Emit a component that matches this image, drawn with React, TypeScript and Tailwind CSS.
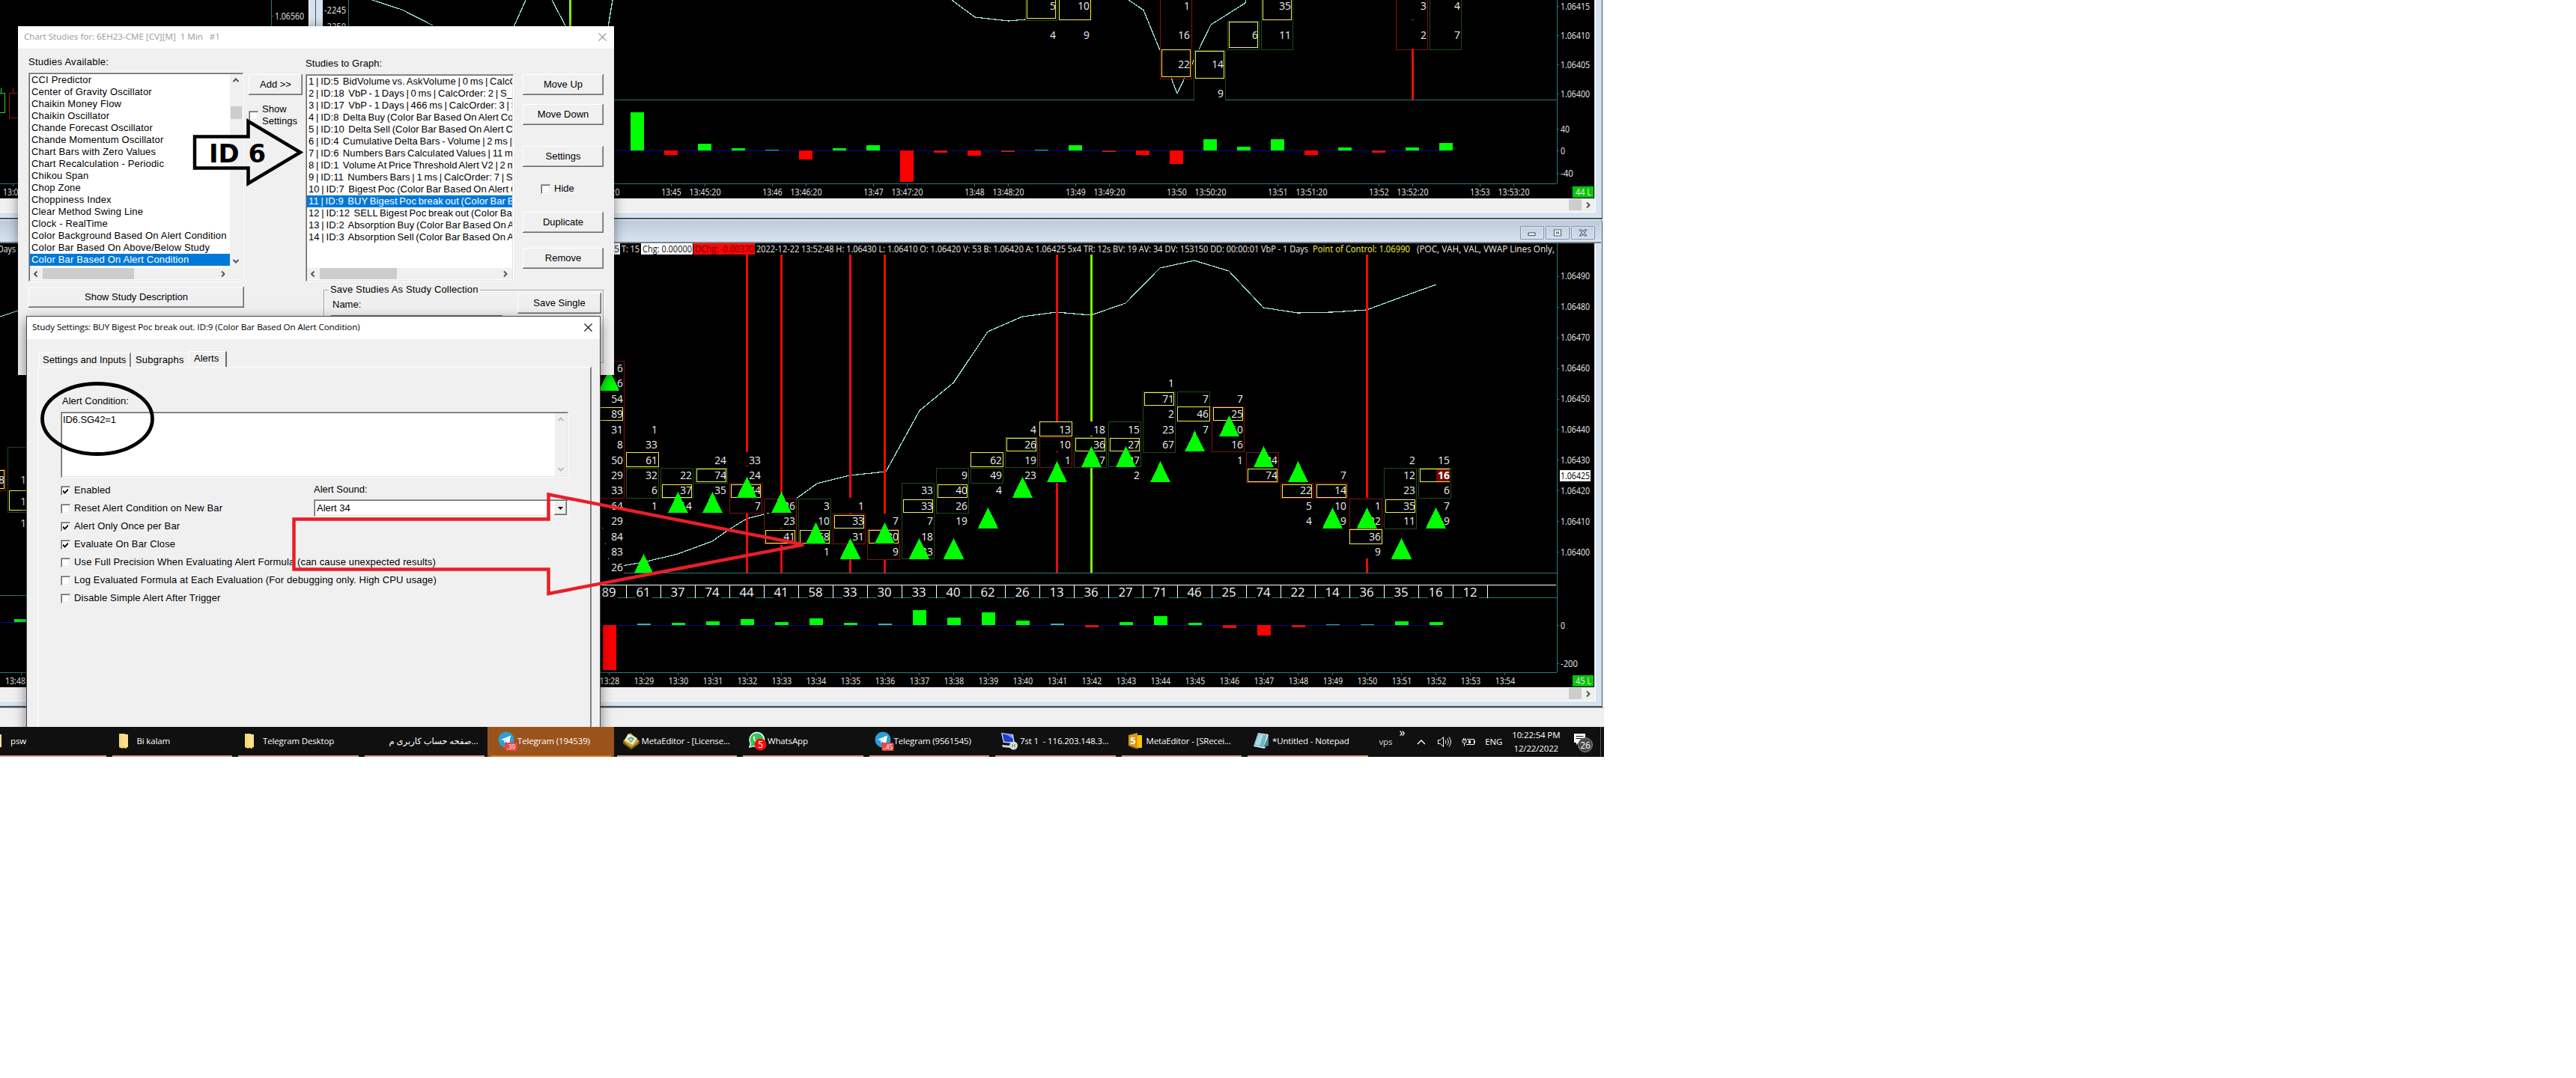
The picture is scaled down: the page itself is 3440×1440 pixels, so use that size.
import type { ReactNode } from 'react';
import clsx from 'clsx';

type Box = 'g' | 'r';

interface Column {
  top: number; // row index of the first value, 0 = 1.06400
  values: string[];
  poc: number; // index in values that gets the yellow frame
  box?: [Box, number, number]; // colour, top row, bottom row
  wide?: boolean;
  marker?: number;
  total: string;
  delta: number;
}

const COLUMNS: Column[] = [
  { top: 12, values: ['6', '6', '54', '89', '31', '8', '50', '29', '33', '64', '29', '84', '83', '26'], poc: 3, box: ['r', 12, 4], marker: 11, total: '89', delta: -60 },
  { top: 8, values: ['1', '33', '61', '32', '6', '1'], poc: 2, wide: true, box: ['g', 5, 4], marker: -1, total: '61', delta: 2 },
  { top: 5, values: ['22', '37', '14'], poc: 1, box: ['g', 5, 4], marker: 3, total: '37', delta: 3 },
  { top: 6, values: ['24', '74', '35'], poc: 1, box: ['g', 5, 5], marker: 3, total: '74', delta: 5 },
  { top: 6, values: ['33', '24', '44', '7'], poc: 2, box: ['r', 4, 3], marker: 4, total: '44', delta: 8 },
  { top: 3, values: ['26', '23', '41'], poc: 2, box: ['r', 3, 1], marker: 3, total: '41', delta: 4 },
  { top: 3, values: ['3', '10', '58', '1'], poc: 2, box: ['g', 3, 1], marker: 1, total: '58', delta: 9 },
  { top: 3, values: ['1', '33', '31'], poc: 1, box: ['r', 2, 1], marker: 0, total: '33', delta: 3 },
  { top: 2, values: ['7', '30', '9'], poc: 1, box: ['r', 1, 0], marker: 1, total: '30', delta: 2 },
  { top: 4, values: ['33', '33', '7', '18', '33'], poc: 1, box: ['g', 4, 0], marker: 0, total: '33', delta: 20 },
  { top: 5, values: ['9', '40', '26', '19'], poc: 1, box: ['g', 5, 3], marker: 0, total: '40', delta: 10 },
  { top: 6, values: ['62', '49', '4'], poc: 0, wide: true, box: ['g', 5, 5], marker: 2, total: '62', delta: 17 },
  { top: 8, values: ['4', '26', '19', '23'], poc: 1, box: ['g', 7, 6], marker: 4, total: '26', delta: 6 },
  { top: 8, values: ['13', '10', '1'], poc: 0, wide: true, box: ['r', 7, 6], marker: 5, total: '13', delta: 2 },
  { top: 8, values: ['18', '36', '17'], poc: 1, box: ['g', 7, 6], marker: 6, total: '36', delta: -3 },
  { top: 8, values: ['15', '27', '27', '2'], poc: 1, box: ['g', 8, 6], marker: 6, total: '27', delta: 4 },
  { top: 11, values: ['1', '71', '2', '23', '67'], poc: 1, box: ['g', 10, 7], marker: 5, total: '71', delta: 12 },
  { top: 10, values: ['7', '46', '7'], poc: 1, wide: true, box: ['g', 10, 10], marker: 7, total: '46', delta: 3 },
  { top: 10, values: ['7', '25', '10', '16', '1'], poc: 1, box: ['r', 9, 7], marker: 8, total: '25', delta: -4 },
  { top: 6, values: ['34', '74'], poc: 1, box: ['r', 6, 5], marker: 6, total: '74', delta: -14 },
  { top: 4, values: ['22', '5', '4'], poc: 0, box: ['r', 4, 4], marker: 5, total: '22', delta: -3 },
  { top: 5, values: ['7', '14', '10', '9'], poc: 1, box: ['r', 4, 4], marker: 2, total: '14', delta: 1 },
  { top: 3, values: ['1', '22', '36', '9'], poc: 2, wide: true, box: ['r', 3, 2], marker: 2, total: '36', delta: 1 },
  { top: 6, values: ['2', '12', '23', '35', '11'], poc: 3, box: ['g', 5, 2], marker: 0, total: '35', delta: 5 },
  { top: 6, values: ['15', '16', '6', '7', '9'], poc: 1, box: ['g', 5, 4], marker: 2, total: '16', delta: 4 },
];

// [x, y1, y2]
const RED_LINES = [
  [998, 340, 604], [998, 622, 623], [998, 685, 765],
  [1044, 340, 662], [1044, 705, 706], [1044, 728, 765],
  [1136, 340, 665], [1136, 685, 686], [1136, 746, 765],
  [1182, 340, 686], [1182, 747, 765],
  [1412, 340, 563], [1412, 603, 604], [1412, 645, 765],
  [1826, 340, 665], [1826, 746, 765],
];
const LIME_LINES = [[1458, 340, 563], [1458, 582, 583], [1458, 625, 765]];

const TOP_BARS = [51, -6, 9, 3, 1, -12, 3, 7, -42, -3, -7, -2, 1, 7, -2, -6, -18, 15, 5, 15, -6, 4, -3, 4, 10];

const TOP_TIMES: [number, string][] = [
  [807, '13:44:20'], [897, '13:45'], [942, '13:45:20'], [1032, '13:46'], [1077, '13:46:20'], [1167, '13:47'],
  [1212, '13:47:20'], [1302, '13:48'], [1347, '13:48:20'], [1437, '13:49'], [1482, '13:49:20'], [1572, '13:50'],
  [1617, '13:50:20'], [1707, '13:51'], [1752, '13:51:20'], [1842, '13:52'], [1887, '13:52:20'], [1977, '13:53'],
  [2022, '13:53:20'],
];

const STUDIES = [
  'CCI Predictor', 'Center of Gravity Oscillator', 'Chaikin Money Flow', 'Chaikin Oscillator',
  'Chande Forecast Oscillator', 'Chande Momentum Oscillator', 'Chart Bars with Zero Values',
  'Chart Recalculation - Periodic', 'Chikou Span', 'Chop Zone', 'Choppiness Index', 'Clear Method Swing Line',
  'Clock - RealTime', 'Color Background Based On Alert Condition', 'Color Bar Based On Above/Below Study',
  'Color Bar Based On Alert Condition',
];

const GRAPHED = [
  '1 | ID:5  BidVolume vs. AskVolume | 0 ms | CalcOrder: 1',
  '2 | ID:18  VbP - 1 Days | 0 ms | CalcOrder: 2 | S_VbP',
  '3 | ID:17  VbP - 1 Days | 466 ms | CalcOrder: 3 | S_VbP',
  '4 | ID:8  Delta Buy (Color Bar Based On Alert Condition)',
  '5 | ID:10  Delta Sell (Color Bar Based On Alert Condition)',
  '6 | ID:4  Cumulative Delta Bars - Volume | 2 ms |',
  '7 | ID:6  Numbers Bars Calculated Values | 11 ms',
  '8 | ID:1  Volume At Price Threshold Alert V2 | 2 ms',
  '9 | ID:11  Numbers Bars | 1 ms | CalcOrder: 7 | S_',
  '10 | ID:7  Bigest Poc (Color Bar Based On Alert Condition)',
  '11 | ID:9  BUY Bigest Poc break out (Color Bar Based',
  '12 | ID:12  SELL Bigest Poc break out (Color Bar Based',
  '13 | ID:2  Absorption Buy (Color Bar Based On Alert',
  '14 | ID:3  Absorption Sell (Color Bar Based On Alert',
];

const CHECKS: [string, boolean][] = [
  ['Enabled', true],
  ['Reset Alert Condition on New Bar', false],
  ['Alert Only Once per Bar', true],
  ['Evaluate On Bar Close', true],
  ['Use Full Precision When Evaluating Alert Formula (can cause unexpected results)', false],
  ['Log Evaluated Formula at Each Evaluation (For debugging only. High CPU usage)', false],
  ['Disable Simple Alert After Trigger', false],
];

const TEAL = '#2a7a78';
const RAISED = 'bg-[#f0f0f0] shadow-[inset_-1px_-1px_#696969,inset_1px_1px_#fff,inset_-2px_-2px_#a0a0a0]';
const SUNKEN = 'bg-white shadow-[inset_1px_1px_#a0a0a0,inset_-1px_-1px_#fff,inset_2px_2px_#696969,inset_-2px_-2px_#e3e3e3]';

const cx = (i: number) => 814.5 + 46 * i;
const rowY = (k: number) => 737.5 - 20.45 * k;

function Label({ x, y, w, anchor = 'start', fill = '#e8e8e8', children }: {
  x: number; y: number; w: number; anchor?: 'start' | 'middle' | 'end'; fill?: string; children: string;
}) {
  return (
    <text x={x} y={y + 4} fontSize="12.3" textAnchor={anchor} textLength={w} lengthAdjust="spacingAndGlyphs" fill={fill} xmlSpace="preserve">
      {children}
    </text>
  );
}

function Num({ x, y, children }: { x: number; y: number; children: string }) {
  return <text x={x} y={y + 4.7} fontSize="13.8" textAnchor="end" fill="#f0f0f0">{children}</text>;
}

function Frame({ x1, y1, x2, y2, color }: { x1: number; y1: number; x2: number; y2: number; color: string }) {
  return <rect x={Math.round(x1) + 0.5} y={Math.round(y1) + 0.5} width={Math.round(x2 - x1)} height={Math.round(y2 - y1)} fill="none" stroke={color} />;
}

function Bar({ x, zero, v }: { x: number; zero: number; v: number }) {
  const color = v > 0 ? (v <= 2 ? '#35c46a' : '#00ff00') : v >= -2 ? '#b02222' : v >= -4 ? '#e01010' : '#ff0000';
  return <rect x={x - 9} y={v > 0 ? zero - v : zero} width="18" height={Math.abs(v)} fill={color} />;
}

function Chevron({ dir, muted }: { dir: 'up' | 'down' | 'left' | 'right'; muted?: boolean }) {
  const d = { up: 'M1.5 6 5 2.5 8.5 6', down: 'M1.5 3 5 6.5 8.5 3', left: 'M6.5 1.5 3 5 6.5 8.5', right: 'M3 1.5 6.5 5 3 8.5' }[dir];
  return (
    <svg width="10" height="10" className="shrink-0">
      <path d={d} fill="none" stroke={muted ? '#bdbdbd' : '#555'} strokeWidth="2" />
    </svg>
  );
}

function TopChart() {
  return (
    <svg viewBox="432 0 1698 265" width="1698" height="265" shapeRendering="crispEdges" className="block shrink-0 bg-black">
      <g fill="none" stroke="#a8f0ea" strokeWidth="1.2">
        <path d="M498 0 538 13 579 34M703 0 687 36M738 0 757 36M819 0 813 36" />
        <path d="M1272 0 1303 23 1348 28 1370 26M1508 0 1528 13.500 1550 67M1565 104 1573 125 1583 104M1593 86 1595 80M1602 66 1618 33 1664 4 1665 0" />
      </g>
      <path d="M466.500 0V245M432 133.500H2080M432 245.500H2080M2080.500 0V245" stroke={TEAL} fill="none" />
      <rect x="761" y="0" width="3" height="40" fill="#7fee10" />
      <Label x={434} y={14} w={29}>-2245</Label>
      <Label x={434} y={36} w={29}>-2250</Label>
      <rect x="1886" y="65" width="3" height="68" fill="#e80c0c" />
      <rect x="1886" y="26" width="3" height="1" fill="#c02020" />
      <g>
        <Frame x1={1370} y1={-4} x2={1412} y2={27} color="#1d4a1d" />
        <Frame x1={1372} y1={-4} x2={1410} y2={24} color="#f5f04a" />
        <Frame x1={1415} y1={-4} x2={1457} y2={26} color="#f5f04a" />
        <Frame x1={1550} y1={-4} x2={1592} y2={105} color="#7d1414" />
        <Frame x1={1552} y1={66} x2={1590} y2={102} color="#f5f04a" />
        <path d="M1595.500 133V67.500H1637.500V133" fill="#000" stroke="#1d4a1d" />
        <rect x="1596" y="130" width="41" height="5" fill="#000" />
        <Frame x1={1597} y1={68} x2={1635} y2={104} color="#f5f04a" />
        <Frame x1={1640} y1={28} x2={1682} y2={66} color="#1d4a1d" />
        <Frame x1={1642} y1={29} x2={1680} y2={63} color="#f5f04a" />
        <Frame x1={1685} y1={-4} x2={1727} y2={66} color="#1d4a1d" />
        <Frame x1={1687} y1={-4} x2={1725} y2={26} color="#f5f04a" />
        <Frame x1={1865} y1={-4} x2={1907} y2={66} color="#7d1414" />
        <Frame x1={1910} y1={-4} x2={1952} y2={66} color="#1d4a1d" />
      </g>
      <Num x={1411} y={8.500}>5</Num>
      <Num x={1456} y={8.500}>10</Num>
      <Num x={1411} y={47.500}>4</Num>
      <Num x={1456} y={47.500}>9</Num>
      <Num x={1590} y={8.500}>1</Num>
      <Num x={1590} y={47.500}>16</Num>
      <Num x={1590} y={86.500}>22</Num>
      <Num x={1635} y={86.500}>14</Num>
      <Num x={1635} y={125.500}>9</Num>
      <Num x={1681} y={47.500}>6</Num>
      <Num x={1725} y={8.500}>35</Num>
      <Num x={1725} y={47.500}>11</Num>
      <Num x={1906} y={8.500}>3</Num>
      <Num x={1906} y={47.500}>2</Num>
      <Num x={1951} y={8.500}>4</Num>
      <Num x={1951} y={47.500}>7</Num>
      <path d="M820 201.500H1932" stroke="#0a0a8c" />
      {TOP_BARS.map((v, i) => <Bar key={i} x={852 + 45 * i} zero={201} v={v} />)}
      {TOP_TIMES.map(([x, t]) => (
        <g key={t}>
          <path d={`M${x + 0.5} 246v3`} stroke={TEAL} />
          <Label x={x + 0.5} y={257} w={t.length > 5 ? 42 : 26.5} anchor="middle">{t}</Label>
        </g>
      ))}
      {['1.06415', '1.06410', '1.06405', '1.06400'].map((t, i) => (
        <g key={t}>
          <path d={`M2081 ${8.5 + 39 * i}h2`} stroke={TEAL} />
          <Label x={2085} y={8.500 + 39 * i} w={39}>{t}</Label>
        </g>
      ))}
      <path d="M2081 172.500h2M2081 201.500h2M2081 231.500h2" stroke={TEAL} />
      <Label x={2085} y={172.500} w={12}>40</Label>
      <Label x={2085} y={201.500} w={6}>0</Label>
      <Label x={2085} y={231.500} w={17}>-40</Label>
      <rect x="2101" y="249" width="28" height="15" fill="#08c408" />
      <Label x={2105} y={257} w={21}>44 L</Label>
    </svg>
  );
}

function MainChart() {
  const last = COLUMNS.length - 1;
  return (
    <svg viewBox="432 325 1698 593" width="1698" height="593" shapeRendering="crispEdges" className="block shrink-0 bg-black">
      <path d="M834 765.500H2080M2080.500 325V898M432 898.500H2080M800 798.500H2080" stroke={TEAL} fill="none" />
      <path
        d="M834 755.500 860 751 906 740 952 723 975 707 998 693 1021 687M1025 685.500H1028M1065 665.500 1092 646 1136 635 1184 630 1229 548.500 1274.500 511 1320 443 1366 423 1412 417 1458 421 1504 405 1550 358 1596 348 1642 362 1688 411 1734 418 1780 417 1826 414 1872 397 1919 380"
        fill="none" stroke="#a8f0ea" strokeWidth="1.2"
      />
      <path d="M805 705.500h1M809 726.500h1M813 746.500h1" stroke="#ddd" />
      {RED_LINES.map(([x, a, b], i) => <rect key={i} x={x - 1} y={a} width="3" height={b - a} fill="#e80c0c" />)}
      {LIME_LINES.map(([x, a, b], i) => <rect key={i} x={x - 1} y={a} width="3" height={b - a} fill="#7fee10" />)}

      {COLUMNS.map((c, i) => {
        const x = cx(i);
        const py = rowY(c.top - c.poc);
        return (
          <g key={i}>
            {c.box && (
              <Frame x1={x - 23.5} y1={rowY(c.box[1]) - 10.5} x2={x + 19.5} y2={rowY(c.box[2]) + 9} color={c.box[0] === 'g' ? '#1d4a1d' : '#7d1414'} />
            )}
            {c.wide
              ? <Frame x1={x - 23.5} y1={py - 10.5} x2={x + 19.5} y2={py + 8} color="#f5f04a" />
              : <Frame x1={x - 21.5} y1={py - 9} x2={x + 17.5} y2={py + 8} color="#f5f04a" />}
            {i === last && <rect x={x + 0.5} y={rowY(5) - 8} width="18" height="16" fill="#7a0404" />}
            {c.values.map((v, j) => {
              if (i === last && j === 1) {
                return <text key={j} x={x + 18.5} y={rowY(5) + 5} fontSize="14" fontWeight="700" textAnchor="end" fill="#fff">{v}</text>;
              }
              return <Num key={j} x={x + 18.500} y={rowY(c.top - j)}>{v}</Num>;
            })}
          </g>
        );
      })}

      {/* alert markers sit over the numbers */}
      {COLUMNS.map((c, i) => {
        if (c.marker === undefined) return null;
        const y = rowY(c.marker) + 9;
        if (c.marker === -1) return <path key={i} d={`M${cx(i)} 739.500l12.500 25.500h-25z`} fill="#00ff00" />;
        return <path key={i} d={`M${cx(i)} ${y - 28}l13.500 28h-27z`} fill="#00ff00" />;
      })}

      <path d="M800 781.500H2079" stroke="#fff" />
      {[...COLUMNS.map((c) => c.total), '12'].map((t, i) => (
        <g key={i}>
          <path d={`M${Math.round(cx(i) + 22.5)}.5 782v17`} stroke="#fff" />
          <rect x={cx(i) - 11} y="784" width="22" height="16" fill="#000" />
          <text x={cx(i) - 0.5} y="797" fontSize="16.8" textAnchor="middle" fill="#f4f4f4">{t}</text>
        </g>
      ))}

      <path d="M800 835.500H1919" stroke="#0a0a8c" />
      {COLUMNS.map((c, i) => <Bar key={i} x={cx(i)} zero={835} v={c.delta} />)}
      {Array.from({ length: 27 }, (_, i) => (
        <g key={i}>
          <path d={`M${cx(i)} 899v3`} stroke={TEAL} />
          <Label x={cx(i) + 0.500} y={909.500} w={26.500} anchor="middle">{`13:${28 + i}`}</Label>
        </g>
      ))}

      {Array.from({ length: 10 }, (_, i) => 1.064 + i * 0.0001).map((p, i) => (
        <g key={i}>
          <path d={`M2081 ${Math.round(rowY(i * 2) - 0.5)}.5h2`} stroke={TEAL} />
          <Label x={2085} y={rowY(i * 2)} w={39}>{p.toFixed(5)}</Label>
        </g>
      ))}
      <rect x="2084" y="628" width="41" height="15" fill="#fff" />
      <Label x={2085} y={635.500} w={39} fill="#000">1.06425</Label>
      <path d="M2081 835.500h2M2081 886.500h2" stroke={TEAL} />
      <Label x={2085} y={835.500} w={6}>0</Label>
      <Label x={2085} y={887} w={23}>-200</Label>
      <rect x="2101" y="902" width="28" height="15" fill="#08c408" />
      <Label x={2105} y={910} w={21}>45 L</Label>

      <rect x="780" y="325" width="49" height="15" fill="#fff" />
      <Label x={814} y={332.500} w={14} fill="#222">25</Label>
      <Label x={831} y={332.500} w={24}>T: 15</Label>
      <rect x="857" y="325" width="69" height="15" fill="#fff" />
      <Label x={859} y={332.500} w={66} fill="#111">Chg: 0.00000</Label>
      <rect x="927" y="325" width="82" height="15" fill="#f80808" />
      <Label x={929} y={332.500} w={79} fill="#6e0000">DChg: -0.00370</Label>
      <Label x={1011} y={332.500} w={737}>
        2022-12-22 13:52:48 H: 1.06430 L: 1.06410 O: 1.06420 V: 53 B: 1.06420 A: 1.06425 5x4 TR: 12s BV: 19 AV: 34 DV: 153150 DD: 00:00:01 VbP - 1 Days
      </Label>
      <Label x={1754} y={332.500} w={130} fill="#f5f53c">Point of Control: 1.06990</Label>
      <Label x={1893} y={332.500} w={184}>(POC, VAH, VAL, VWAP Lines Only,</Label>
    </svg>
  );
}

function LeftTopChart() {
  return (
    <svg width="412" height="265" shapeRendering="crispEdges" className="block shrink-0 bg-black">
      <path d="M362.500 0V245M0 245.500H362M363 21.500h2M17.500 246v3" stroke={TEAL} fill="none" />
      <Label x={367} y={22} w={39}>1.06560</Label>
      <path d="M-5 124.500H6.500V150.500H-5M1.500 118v6" stroke="#35d235" fill="none" />
      <path d="M12.500 124.500H30V157.500H12.500zM17.500 118v6" stroke="#a51818" fill="none" />
      <Label x={4} y={257} w={26.500}>13:07</Label>
    </svg>
  );
}

function LeftBottomChart() {
  return (
    <svg viewBox="0 325 412 593" width="412" height="593" shapeRendering="crispEdges" className="block shrink-0 bg-black">
      <Label x={-3} y={333} w={24}>Days</Label>
      <path d="M0 423 24 415" stroke="#a8f0ea" />
      <path d="M0 795.500H60M0 898.500H60M28.500 899v3" stroke={TEAL} />
      <Frame x1={-5} y1={627} x2={7} y2={655} color="#7d1414" />
      <Frame x1={-5} y1={628} x2={5} y2={652} color="#f5f04a" />
      <Frame x1={10} y1={597} x2={50} y2={684} color="#1d4a1d" />
      <Frame x1={12} y1={655} x2={50} y2={681} color="#f5f04a" />
      <Num x={6} y={641.500}>8</Num>
      <Num x={43} y={641.500}>12</Num>
      <Num x={43} y={670.500}>14</Num>
      <Num x={43} y={699.500}>11</Num>
      <path d="M0 831.500H60" stroke="#0a0a8c" />
      <rect x="19" y="827" width="18" height="4" fill="#10e820" />
      <Label x={7} y={910} w={27}>13:48</Label>
    </svg>
  );
}

function ChartScroll() {
  return (
    <div className="flex h-[18px] shrink-0 items-center justify-end bg-[#f0f0f0] pr-1">
      <div className="mb-[2px] h-[15px] w-[17px] bg-[#cdcdcd]" />
      <div className="ml-[4px]"><Chevron dir="right" /></div>
    </div>
  );
}

function CaptionButton({ children }: { children: ReactNode }) {
  return (
    <div className="flex h-[18px] w-8 items-center justify-center rounded-[1px] border border-[#8593ab] shadow-[inset_0_0_0_1px_#dbe6f2]">
      <svg width="12" height="10" fill="none" stroke="#59616e" strokeWidth="1.2">{children}</svg>
    </div>
  );
}

function ChartWindow({ className, title, children }: { className: string; title?: ReactNode; children: ReactNode }) {
  return (
    <section className={clsx('absolute flex flex-col border-r border-b-2 border-[#4a4f52] bg-[#d6e3f1] pr-2 pb-[7px]', className)}>
      {title}
      <div className="flex flex-col border-r border-b border-white">{children}</div>
    </section>
  );
}

function PushButton({ className, children }: { className?: string; children: ReactNode }) {
  return <div className={clsx('flex h-7 shrink-0 items-center justify-center pb-px', RAISED, className)}>{children}</div>;
}

function CheckBox({ checked }: { checked?: boolean }) {
  return (
    <div className={clsx('flex h-[13px] w-[13px] shrink-0 items-center justify-center', SUNKEN)}>
      {checked && (
        <svg width="9" height="9"><path d="M1 3.500 3.500 6 8 1.500V4.200L3.500 8.700 1 6.200z" fill="#000" /></svg>
      )}
    </div>
  );
}

function ListRows({ rows, selected, className }: { rows: string[]; selected: number; className?: string }) {
  return (
    <div className={clsx('min-w-0 flex-1 overflow-hidden whitespace-pre', className)}>
      {rows.map((r, i) => (
        <div key={r} className={clsx('h-4 overflow-hidden pl-[2px] leading-4', i === selected && 'bg-[#0078d7] text-white')}>{r}</div>
      ))}
    </div>
  );
}

function HScroll({ thumb, className }: { thumb: string; className?: string }) {
  return (
    <div className={clsx('flex h-[15px] shrink-0 items-center bg-[#f0f0f0]', className)}>
      <span className="ml-[3px] mr-1"><Chevron dir="left" /></span>
      <div className={clsx('h-[15px] bg-[#cdcdcd]', thumb)} />
      <span className="mr-1 ml-auto"><Chevron dir="right" /></span>
    </div>
  );
}

function CloseX({ color }: { color: string }) {
  return (
    <svg width="11" height="11"><path d="M.5.5l10 10M10.500.5l-10 10" stroke={color} strokeWidth="1.1" /></svg>
  );
}

function ChartStudiesDialog() {
  return (
    <section className="absolute top-[35px] left-6 flex h-[466px] w-[796px] flex-col bg-[#f0f0f0] font-['Liberation_Sans',sans-serif] text-[13px] leading-4 text-black shadow-[0_2px_14px_rgba(0,0,0,0.45)]">
      <header className="flex h-[30px] shrink-0 items-center justify-between bg-white pr-[10px] pb-[2px] pl-2 font-['Open_Sans',sans-serif] text-[11.6px] whitespace-pre text-[#999]">
        <span>{'Chart Studies for: 6EH23-CME [CV][M]  1 Min   #1'}</span>
        <CloseX color="#999" />
      </header>
      <div className="flex">
        <div className="ml-[14px] flex w-[288px] flex-col pt-[10px]">
          <span className="tracking-[0.27px]">Studies Available:</span>
          <div className={clsx('mt-[6px] flex h-[279px] w-[287px] flex-col p-[2px]', SUNKEN)}>
            <div className="flex flex-1">
              <ListRows rows={STUDIES} selected={15} className="tracking-[0.17px]" />
              <div className="flex w-4 flex-col items-center bg-[#f0f0f0] pt-1">
                <Chevron dir="up" />
                <div className="mt-[29px] h-[17px] w-[15px] bg-[#cdcdcd]" />
                <span className="mt-auto mb-1"><Chevron dir="down" /></span>
              </div>
            </div>
            <HScroll thumb="w-[122px]" className="mb-px pr-4" />
          </div>
          <PushButton className="mt-[7px]">Show Study Description</PushButton>
        </div>

        <div className="ml-[6px] flex w-[72px] flex-col pt-[34px]">
          <PushButton>Add &gt;&gt;</PushButton>
          <div className="mt-[11px] flex gap-[5px]">
            <div className="pt-[10px]"><CheckBox /></div>
            <span>Show<br />Settings</span>
          </div>
        </div>

        <div className="ml-1 flex flex-col">
          <div className="flex">
            <div className="flex w-[278px] flex-col pt-[12px]">
              <span className="tracking-[0.06px]">Studies to Graph:</span>
              <div className={clsx('mt-[6px] flex h-[277px] flex-col p-[2px]', SUNKEN)}>
                <div className="flex flex-1"><ListRows rows={GRAPHED} selected={10} className="tracking-[0.13px] [word-spacing:-1.1px]" /></div>
                <HScroll thumb="w-[103px]" className="mb-px" />
              </div>
            </div>
            <div className="ml-3 flex w-[108px] flex-col pt-[34px]">
              <PushButton>Move Up</PushButton>
              <PushButton className="mt-3">Move Down</PushButton>
              <PushButton className="mt-7">Settings</PushButton>
              <div className="mt-[21px] ml-6 flex h-4 items-center gap-[5px]"><CheckBox />Hide</div>
              <PushButton className="mt-[23px]">Duplicate</PushButton>
              <PushButton className="mt-5">Remove</PushButton>
            </div>
          </div>
          <div className="mt-[11px] ml-6 h-[98px] w-[374px] border border-[#a0a0a0] shadow-[inset_1px_1px_#fff,1px_1px_#fff]">
            <div className="-mt-[9px] ml-[6px] w-max bg-[#f0f0f0] px-[2px] tracking-[0.17px]">Save Studies As Study Collection</div>
            <div className="-mt-1 flex justify-between pr-[2px] pl-[11px]">
              <span className="pt-[8px]">Name:</span>
              <PushButton className="w-[112px]">Save Single</PushButton>
            </div>
            <div className="mt-[2px] ml-[9px] h-px w-[229px] bg-[#696969]" />
          </div>
        </div>
      </div>
    </section>
  );
}

function StudySettingsDialog() {
  return (
    <section className="absolute top-[422px] left-[35px] flex h-[560px] w-[767px] flex-col border border-[#4a4a4a] bg-[#f0f0f0] font-['Liberation_Sans',sans-serif] text-[13px] leading-4 text-black shadow-[0_6px_16px_rgba(0,0,0,0.5)]">
      <header className="flex h-[30px] shrink-0 items-center justify-between bg-white pr-[10px] pb-[2px] pl-[7px] font-['Open_Sans',sans-serif] text-[11.6px] tracking-[-0.1px] whitespace-pre">
        <span>Study Settings: BUY Bigest Poc break out. ID:9 (Color Bar Based On Alert Condition)</span>
        <CloseX color="#111" />
      </header>
      <div className="flex h-[38px] shrink-0 items-end pl-4 whitespace-nowrap">
        <div className="h-5 w-[123px] border-t border-r-2 border-l border-t-white border-r-[#808080] border-l-white pt-px pl-1">Settings and Inputs</div>
        <div className="ml-px h-5 w-[76px] border-t border-l border-white pt-px pl-1 tracking-[0.2px]">Subgraphs</div>
        <div className="h-[22px] w-[51px] border-t border-r-2 border-l border-t-white border-r-[#696969] border-l-white pt-px pl-[6px]">Alerts</div>
      </div>
      <div className="-mt-px ml-[14px] flex w-[740px] flex-1 flex-col border-t border-r-2 border-l border-t-white border-r-[#808080] border-l-white pl-[30px]">
        <span className="mt-[37px] ml-[2px]">Alert Condition:</span>
        <div className={clsx('mt-[6px] flex h-[88px] w-[678px] p-[2px]', SUNKEN)}>
          <span className="flex-1 pt-px pl-px tracking-[-0.1px]">ID6.SG42=1</span>
          <div className="flex w-4 flex-col items-center justify-between bg-[#f0f0f0] py-1">
            <Chevron dir="up" muted />
            <Chevron dir="down" muted />
          </div>
        </div>
        <div className="mt-[5px] flex">
          <div className="flex w-[338px] flex-col tracking-[0.14px] whitespace-nowrap">
            {CHECKS.map(([text, on]) => (
              <div key={text} className="flex h-6 items-center gap-[5px]"><CheckBox checked={on} />{text}</div>
            ))}
          </div>
          <div className="flex flex-col pt-[3px]">
            <span>Alert Sound:</span>
            <div className={clsx('mt-[5px] flex h-[23px] w-[340px] items-center p-[2px]', SUNKEN)}>
              <span className="flex-1 pl-[2px]">Alert 34</span>
              <div className={clsx('flex h-[19px] w-[17px] items-center justify-center', RAISED)}>
                <svg width="7" height="4"><path d="M0 0h7L3.500 4z" /></svg>
              </div>
            </div>
          </div>
        </div>
      </div>
    </section>
  );
}

function FolderIcon() {
  return (
    <svg width="24" height="24" viewBox="0 0 24 24">
      <path d="M2 2h8l2 2v18l-4-1-6-1z" fill="#e9c15d" />
      <path d="M3 3h11v17l-6 1z" fill="#fbdf8e" />
      <path d="M2 3l5 4v15l-5-2z" fill="#f8d877" />
    </svg>
  );
}

function TelegramIcon({ count }: { count: string }) {
  return (
    <svg width="26" height="26" viewBox="0 0 26 26">
      <circle cx="11" cy="11" r="10.500" fill="#2a9fdb" />
      <path d="M4 11 17 5.500 15 17 10.500 13.500 8.500 15.500 8 12z" fill="#fff" />
      <path d="M8 12 14.500 7.500 9.500 13z" fill="#b9d8ea" />
      <rect x="9.500" y="15" width="16" height="11" rx="2" fill="#ef4540" />
      <text x="17.500" y="23.500" fontSize="8.500" textAnchor="middle" fill="#fff">{count}</text>
    </svg>
  );
}

function MetaBookIcon() {
  return (
    <svg width="24" height="24" viewBox="0 0 24 24">
      <path d="M1 12 11 1 23 12 12 22z" fill="#c9a227" />
      <path d="M1 13 12 20 23 13V15L12 23 1 15z" fill="#8a6a10" />
      <path d="M3 11 8 2 20 8 14 17z" fill="#f4edc8" />
      <path d="M7 9 12 6 16 9 12 14z" fill="#4c9b8e" />
      <path d="M9 9.500 12 8 14 10 12 12z" fill="#c8e6d8" />
    </svg>
  );
}

function WhatsAppIcon() {
  return (
    <svg width="26" height="26" viewBox="0 0 26 26">
      <path d="M1 22 2.500 16A10.500 10.500 0 1 1 7 20.500z" fill="#fff" />
      <path d="M2.800 20.500 4 16A9 9 0 1 1 7.500 19.200z" fill="#35c558" />
      <path d="M8 6c-3 3 1 9 6 10l2-2-3-2-1.500 1c-2-1-2.500-2-3-3l1-1.500z" fill="#fff" />
      <circle cx="16.500" cy="17.500" r="8" fill="#f01010" />
      <text x="16.500" y="22" fontSize="12" textAnchor="middle" fill="#fff">5</text>
    </svg>
  );
}

function RemoteIcon() {
  return (
    <svg width="24" height="24" viewBox="0 0 24 24">
      <path d="M1 1 17 3 19 15 4 14z" fill="#dfe6f2" />
      <path d="M2.500 2.300 15.700 4 17.500 13.500 5 12.700z" fill="#1d3fd0" />
      <path d="M8 3 15.700 4 16.500 9z" fill="#6f9cf5" />
      <path d="M2 17 14 18 13 21 3 20z" fill="#cfd5de" />
      <circle cx="17.500" cy="18" r="5.500" fill="#d9ddd9" />
      <path d="M15 16l2 2-2 2M20 16l-2 2 2 2" stroke="#3a8a3a" fill="none" />
    </svg>
  );
}

function Meta5Icon() {
  return (
    <svg width="24" height="24" viewBox="0 0 24 24">
      <path d="M9 4h11v17H9z" fill="#f7c600" />
      <path d="M2 4 14 1v20L2 18z" fill="#d99a12" />
      <path d="M2 18 14 21 16 23 8 21z" fill="#9c6b05" />
      <text x="8" y="16" fontSize="13" fontWeight="700" textAnchor="middle" fill="#fff">5</text>
    </svg>
  );
}

function NotepadIcon() {
  return (
    <svg width="24" height="24" viewBox="0 0 24 24">
      <path d="M7 1 21 3 16 22 1 19z" fill="#e6eef0" />
      <path d="M7 2 19 4 14 20 2 18z" fill="#6fb7c6" />
      <path d="M8 3 14 4 9 18 3 17z" fill="#a9dbe4" />
      <path d="M14 20 21 5V18z" fill="#4b8592" />
    </svg>
  );
}

const TASKS: { text: string; icon?: ReactNode; active?: boolean }[] = [
  { text: 'psw', icon: <FolderIcon /> },
  { text: 'Bi kalam', icon: <FolderIcon /> },
  { text: 'Telegram Desktop', icon: <FolderIcon /> },
  { text: 'صفحه حساب کاربری م...' },
  { text: 'Telegram (194539)', icon: <TelegramIcon count=".39" />, active: true },
  { text: 'MetaEditor - [License...', icon: <MetaBookIcon /> },
  { text: 'WhatsApp', icon: <WhatsAppIcon /> },
  { text: 'Telegram (9561545)', icon: <TelegramIcon count="..45" /> },
  { text: '7st 1  - 116.203.148.3...', icon: <RemoteIcon /> },
  { text: 'MetaEditor - [SRecei...', icon: <Meta5Icon /> },
  { text: '*Untitled - Notepad', icon: <NotepadIcon /> },
];

function Taskbar() {
  return (
    <footer className="relative flex h-10 w-[2142px] overflow-hidden bg-[#101010] font-['Open_Sans','DejaVu_Sans',sans-serif] text-[11.5px] tracking-[-0.15px] text-white">
      <div className="-ml-[23px] flex shrink-0">
        {TASKS.map((t) => (
          <div key={t.text} className={clsx('flex h-10 w-[168.5px] shrink-0 flex-col px-1', t.active && 'bg-[#9a541b] px-0')}>
            <div className={clsx('flex flex-1 items-center whitespace-pre', t.active ? 'pl-[10px]' : 'pl-[7px]')}>
              <div className="w-[26px] shrink-0">{t.icon}</div>
              <span>{t.text}</span>
            </div>
            <div className={clsx('h-[2px]', t.active ? 'bg-[#dd7a22]' : 'bg-[#dd9484]')} />
          </div>
        ))}
      </div>
      <div className="flex flex-1 items-center pl-[11px]">
        <span className="w-[19px] text-[#ddd]">vps</span>
        <span className="ml-[8px] self-start text-[16px] leading-[14px]">»</span>
        <svg width="12" height="8" className="ml-[16px]"><path d="M1 7 6 2l5 5" fill="none" stroke="#fff" strokeWidth="1.3" /></svg>
        <svg width="19" height="16" className="ml-[16px]" fill="none" stroke="#fff">
          <path d="M.5 5.500h3l4-4v13l-4-4h-3zM10 5.500q2 2.500 0 5M12.500 3.500q3.500 4.500 0 9M15 1.500q5 6.500 0 13" />
        </svg>
        <svg width="18" height="14" className="ml-[13px]" fill="none" stroke="#fff">
          <path d="M7 3.500h9.500v7H6M17.500 5.500v3M1 4.500h5v3q-2.500 2-5 0zM2.500 2v2M4.500 2v2M3.500 9v3.500" />
          <path d="M9 5h3v4H9z" fill="#fff" stroke="none" />
        </svg>
        <span className="ml-[13px] w-[24px]">ENG</span>
        <div className="ml-[11px] flex w-[66px] flex-col text-center leading-[18px] whitespace-nowrap">
          <span>10:22:54 PM</span>
          <span>12/22/2022</span>
        </div>
        <svg width="28" height="28" className="ml-[17px]">
          <path d="M1 3h15v12H7l-3 3v-3H1z" fill="#fff" />
          <path d="M3.500 6.500h10M3.500 9.500h10" stroke="#101010" />
          <circle cx="16" cy="18" r="9.500" fill="#4a4a4a" stroke="#8a8a8a" />
          <text x="16" y="22.500" fontSize="12" textAnchor="middle" fill="#fff">26</text>
        </svg>
      </div>
      <div className="mr-1 h-10 w-px shrink-0 bg-[#555]" />
    </footer>
  );
}

export default function App() {
  return (
    <main className="h-[1440px] w-[3440px] overflow-hidden bg-white font-['Open_Sans',sans-serif]">
      <div className="relative flex h-[971px] w-[2142px] flex-col overflow-hidden bg-white">
        <div className="mt-[945px] h-[26px] border-t border-[#a8a8a8] bg-[#f0f0f0]" />

        <ChartWindow className="top-0 left-0 h-[293px] w-[422px]">
          <LeftTopChart />
          <ChartScroll />
        </ChartWindow>
        <ChartWindow className="top-0 left-[422px] h-[293px] w-[1718px] pl-[9px]">
          <TopChart />
          <ChartScroll />
        </ChartWindow>
        <ChartWindow
          className="top-[293px] left-0 h-[652px] w-[422px]"
          title={<div className="h-8 shrink-0 border-t border-b-2 border-t-white border-b-[#7d8388] bg-linear-to-b from-[#bccad9] to-[#d6e3f1]" />}
        >
          <LeftBottomChart />
          <ChartScroll />
        </ChartWindow>
        <ChartWindow
          className="top-[293px] left-[422px] h-[652px] w-[1718px] rounded-tr-[4px] pl-[9px]"
          title={
            <div className="-mr-[7px] flex h-8 shrink-0 items-center gap-[2px] border-t border-b-2 border-t-white border-b-[#7d8388] bg-linear-to-b from-[#bccad9] to-[#d6e3f1] pr-2 text-[12px] text-[#8a949f]">
              <span className="pt-2 pl-[375px]">3)</span>
              <div className="ml-auto flex gap-[2px] pt-[5px]">
                <CaptionButton><rect x="1" y="5" width="9" height="3.500" fill="#fff" /></CaptionButton>
                <CaptionButton><path d="M1.500 1h9v8h-9zM4.500 4h3v2h-3z" fill="#fff" /></CaptionButton>
                <CaptionButton><path d="M1.500 1h2.500l2 2.500L8 1h2.500L7.500 5l3 4H8L6 6.500 4 9H1.500l3-4z" fill="#fff" /></CaptionButton>
              </div>
            </div>
          }
        >
          <MainChart />
          <ChartScroll />
        </ChartWindow>

        <ChartStudiesDialog />
        <StudySettingsDialog />

        {/* hand-drawn notes */}
        <svg width="2142" height="971" className="pointer-events-none absolute inset-0" fill="none">
          <path d="M260 182.500H331.500V162L401 203.500 331.500 245V224.500H260z" stroke="#000" strokeWidth="4.500" />
          <text x="279" y="217" fontSize="34" fontWeight="700" textLength="76" lengthAdjust="spacingAndGlyphs" fill="#000" className="font-['DejaVu_Sans',sans-serif]">ID 6</text>
          <ellipse cx="130" cy="559.500" rx="73.500" ry="47" stroke="#000" strokeWidth="4.800" />
          <path d="M392.500 693.500H732.500V660.500L1073 727.500 732.500 793V760.500H392.500z" stroke="#e81f28" strokeWidth="4.500" />
        </svg>
      </div>
      <Taskbar />
    </main>
  );
}
